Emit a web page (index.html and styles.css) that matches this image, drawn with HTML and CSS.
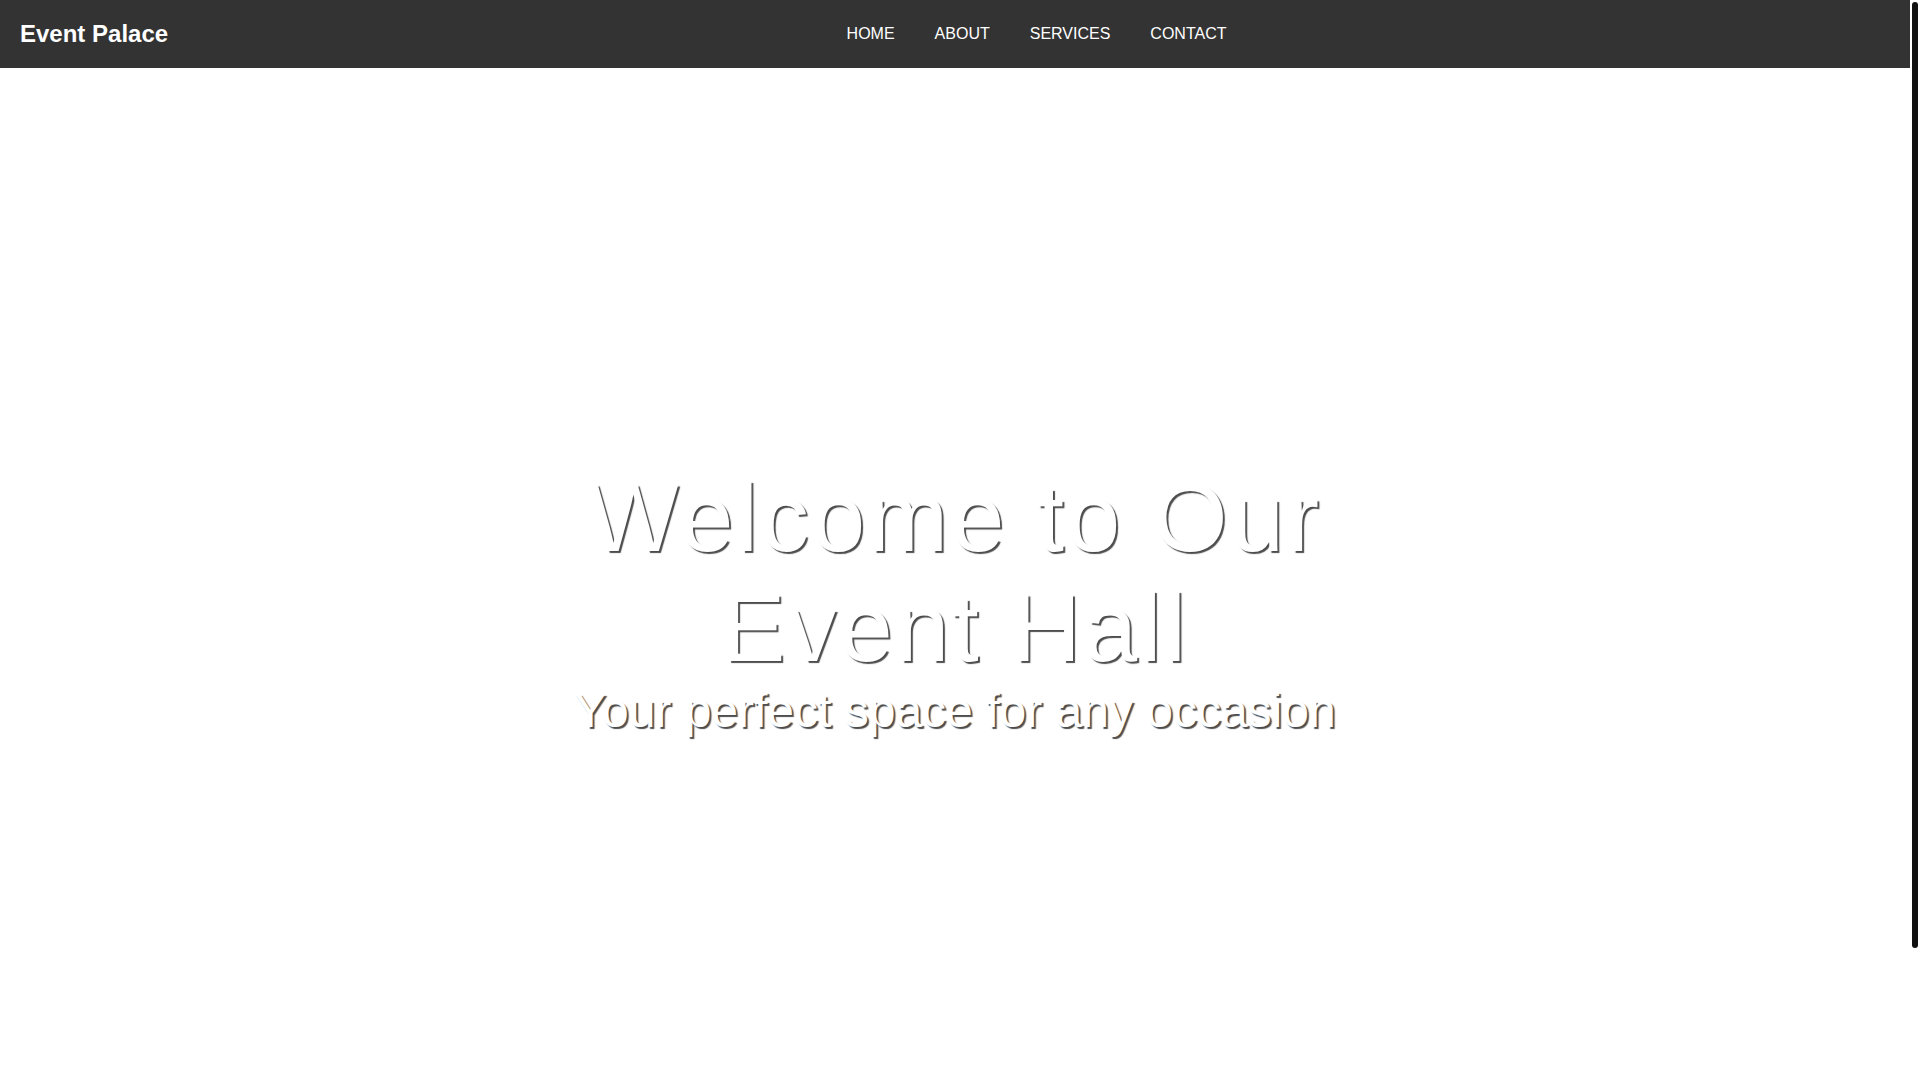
FILE: index.html
```html
<!DOCTYPE html>
<html lang="en">
<head>
<meta charset="UTF-8">
<title>Event Palace</title>
<link rel="stylesheet" href="styles.css">
</head>
<body>
<nav class="navbar">
  <a class="logo" href="#">Event Palace</a>
  <ul class="nav-links">
    <li><a href="#">HOME</a></li>
    <li><a href="#">ABOUT</a></li>
    <li><a href="#">SERVICES</a></li>
    <li><a href="#">CONTACT</a></li>
  </ul>
</nav>
<header class="hero">
  <div class="hero-content">
    <h1>Welcome to Our Event Hall</h1>
    <p>Your perfect space for any occasion</p>
  </div>
</header>
<section class="after-hero"></section>
<div class="scroll-rail" aria-hidden="true"><div class="scroll-thumb"></div></div>
</body>
</html>
```
FILE: styles.css
```css
html, body {
  margin: 0;
  padding: 0;
}
body {
  padding-right: 10px;
  font-family: "Liberation Sans", Arial, sans-serif;
  background: #fff;
  color: #333;
}
.scroll-rail {
  position: fixed;
  top: 0;
  right: 0;
  width: 10px;
  height: 100vh;
  background: #fff;
}
.scroll-thumb {
  margin: 2px 2px 0 2px;
  height: 946px;
  background: #111;
  border-radius: 3px;
}
.navbar {
  display: flex;
  align-items: center;
  background: #333;
  padding: 20px 20px;
}
.logo {
  color: #fff;
  font-size: 24px;
  font-weight: bold;
  text-decoration: none;
  line-height: 27.6px;
}
.nav-links {
  flex: 1;
  display: flex;
  justify-content: center;
  list-style: none;
  margin: 0;
  padding: 0 0 0 15px;
}
.nav-links li {
  margin: 0 20px;
}
.nav-links a {
  color: #fff;
  text-decoration: none;
  font-size: 16px;
}
.hero {
  height: 100vh;
  display: flex;
  align-items: center;
  justify-content: center;
  text-align: center;
  color: #fff;
  text-shadow: 2px 2px 1px rgba(0, 0, 0, 0.7);
}
.hero-content {
  max-width: 800px;
  padding-bottom: 14px;
}
.hero h1 {
  font-size: 96px;
  font-weight: normal;
  letter-spacing: 3px;
  margin: 0;
}
.hero p {
  font-size: 48px;
  margin: 0;
}
.after-hero {
  height: 80px;
}
```
